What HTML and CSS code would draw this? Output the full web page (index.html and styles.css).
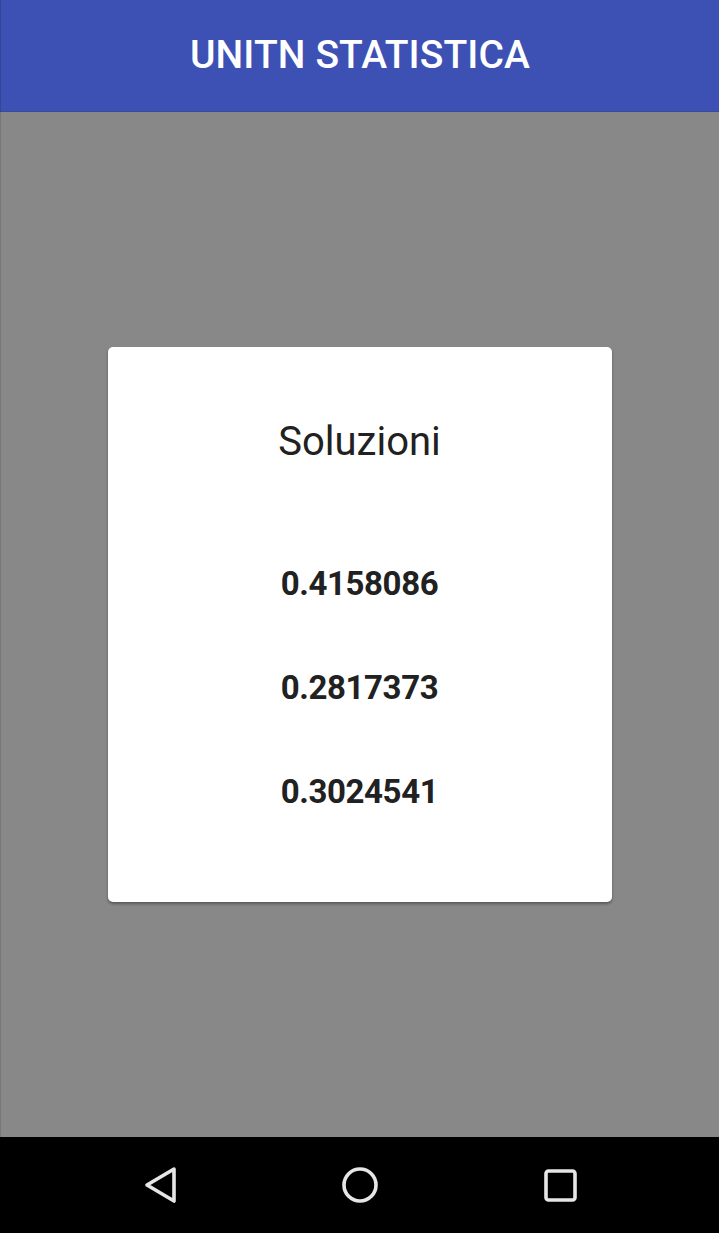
FILE: index.html
```html
<!DOCTYPE html>
<html lang="it">
<head>
<meta charset="utf-8">
<title>UNITN STATISTICA</title>
<link rel="stylesheet" href="styles.css">
</head>
<body>
<div class="screen">
  <header class="appbar">
    <h1 class="appbar-title">UNITN STATISTICA</h1>
  </header>
  <main class="scrim">
    <section class="dialog">
      <h2 class="dialog-title">Soluzioni</h2>
      <div class="results">
        <p class="result">0.4158086</p>
        <p class="result">0.2817373</p>
        <p class="result">0.3024541</p>
      </div>
    </section>
  </main>
  <nav class="navbar">
    <svg class="nav-icon" viewBox="0 0 40 40" width="40" height="40"><path d="M34 4 L7 20 L34 36 Z" fill="none" stroke="#e6e6e6" stroke-width="3.6" stroke-linejoin="round"/></svg>
    <svg class="nav-icon" viewBox="0 0 40 40" width="40" height="40"><circle cx="20" cy="20" r="16" fill="none" stroke="#e6e6e6" stroke-width="3.6"/></svg>
    <svg class="nav-icon" viewBox="0 0 40 40" width="40" height="40"><rect x="6" y="6" width="29" height="29" rx="2.5" fill="none" stroke="#e6e6e6" stroke-width="3.6"/></svg>
  </nav>
</div>
</body>
</html>
```
FILE: styles.css
```css
* { box-sizing: border-box; }
html, body {
  margin: 0;
  padding: 0;
}
body {
  width: 719px;
  height: 1233px;
  overflow: hidden;
  font-family: Roboto, "Liberation Sans", Arial, sans-serif;
}
.screen {
  display: flex;
  flex-direction: column;
  height: 1233px;
}
.appbar {
  height: 112px;
  flex: 0 0 112px;
  background: #3d51b4;
  border-left: 1px solid #34449a;
  border-bottom: 1px solid #3a4a9c;
  padding-top: 32px;
  text-align: center;
}
.appbar-title {
  margin: 0;
  font-size: 39px;
  line-height: 46px;
  font-weight: 500;
  color: #ffffff;
  letter-spacing: 0.1px;
}
.scrim {
  flex: 1 1 auto;
  background: #888888;
  border-left: 1px solid #777777;
  display: flex;
  align-items: center;
  justify-content: center;
}
.dialog {
  width: 504px;
  background: #ffffff;
  border-radius: 5px;
  box-shadow: 0 2px 3px rgba(0, 0, 0, 0.35);
  padding: 71px 0 90px;
  text-align: center;
  margin-left: -1px;
}
.dialog-title {
  margin: 0 0 98px;
  font-size: 40px;
  line-height: 48px;
  font-weight: 400;
  color: #212121;
}
.results {
  display: flex;
  flex-direction: column;
  gap: 64px;
}
.result {
  margin: 0;
  font-size: 33px;
  line-height: 40px;
  font-weight: 700;
  color: #212121;
  letter-spacing: -0.4px;
}
.navbar {
  flex: 0 0 96px;
  height: 96px;
  background: #000000;
  display: flex;
  align-items: center;
  justify-content: center;
  gap: 160px;
}
.nav-icon {
  display: block;
  width: 40px;
  height: 40px;
}
```
